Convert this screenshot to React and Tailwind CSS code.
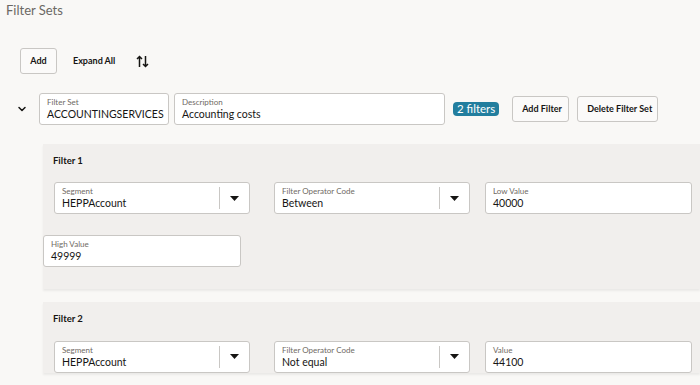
import { ChevronDown } from "lucide-react";

const font = { fontFamily: "Lato, 'Noto Sans', sans-serif" };

const Field = ({ label, value, select, className = "" }) => {
  return (
    <div
      className={`flex h-[32px] items-stretch rounded-[3px] border border-[#c9c7c4] bg-white ${className}`}
    >
      <div className="flex min-w-0 flex-1 flex-col justify-center px-[7px]">
        <span className="text-[8px] leading-[10px] text-[#6f6a64]">{label}</span>
        <span className="whitespace-nowrap text-[10.5px] leading-[14px] text-[#161513]">
          {value}
        </span>
      </div>
      {select && (
        <div className="my-[4px] flex w-[30px] items-center justify-center border-l border-[#c9c7c4]">
          <svg width="9" height="5" viewBox="0 0 9 5">
            <path d="M0 0h9L4.5 5z" fill="#161513" />
          </svg>
        </div>
      )}
    </div>
  );
};

const ActionButton = ({ children, className = "" }) => {
  return (
    <button
      className={`h-[26px] whitespace-nowrap rounded-[3px] border border-[#c9c7c4] bg-[#fbfaf9] px-[9px] text-[9px] font-bold text-[#161513] ${className}`}
    >
      {children}
    </button>
  );
};

const FilterPanel = ({ title, operator, third, high }) => {
  return (
    <div className="ml-[43px] bg-[#f1efed] pt-[10px] shadow-[0_2px_2px_rgba(0,0,0,0.06)]">
      <p className="pl-[10px] text-[9.5px] font-bold text-[#161513]">{title}</p>
      <div className="mt-[14px] flex pl-[11px]">
        <Field label="Segment" value="HEPPAccount" select className="w-[196px]" />
        <Field
          label="Filter Operator Code"
          value={operator}
          select
          className="ml-[24px] w-[196px]"
        />
        <Field label={third.label} value={third.value} className="ml-[15px] w-[207px]" />
      </div>
      {high && (
        <div className="pb-[22px] pt-[21px]">
          <Field label="High Value" value={high} className="w-[198px]" />
        </div>
      )}
    </div>
  );
};

const App = () => {
  return (
    <div style={font} className="h-[385px] w-[700px] overflow-hidden bg-[#f9f8f6]">
      <h1 className="pl-[6px] pt-[1px] text-[13px] leading-[18px] text-[#6b6864]">
        Filter Sets
      </h1>

      <div className="mt-[29px] flex items-center pl-[20px]">
        <ActionButton className="w-[37px] px-0">Add</ActionButton>
        <span className="ml-[16px] text-[9px] font-bold text-[#161513]">Expand All</span>
        <svg className="ml-[21px]" width="13" height="13" viewBox="0 0 13 13">
          <path
            d="M3.5 12V1.5M1 4l2.5-2.5L6 4M9.5 1v10.5M7 9l2.5 2.5L12 9"
            fill="none"
            stroke="#161513"
            strokeWidth="1.5"
          />
        </svg>
      </div>

      <div className="mt-[19px] flex items-center">
        <div className="flex w-[39px] justify-center pl-[4px]">
          <ChevronDown size={12} strokeWidth={3} color="#161513" />
        </div>
        <Field label="Filter Set" value="ACCOUNTINGSERVICES" className="w-[130px]" />
        <Field label="Description" value="Accounting costs" className="ml-[5px] w-[271px]" />
        <span className="ml-[8px] rounded-[4px] bg-[#227e9e] px-[4px] text-[11.5px] leading-[14px] text-white">
          2 filters
        </span>
        <ActionButton className="ml-[13px] w-[57px] px-0">Add Filter</ActionButton>
        <ActionButton className="ml-[8px] w-[81px] px-0">Delete Filter Set</ActionButton>
      </div>

      <div className="mt-[19px]">
        <FilterPanel
          title="Filter 1"
          operator="Between"
          third={{ label: "Low Value", value: "40000" }}
          high="49999"
        />
      </div>
      <div className="mt-[13px]">
        <FilterPanel
          title="Filter 2"
          operator="Not equal"
          third={{ label: "Value", value: "44100" }}
        />
      </div>
    </div>
  );
};

export default App;
